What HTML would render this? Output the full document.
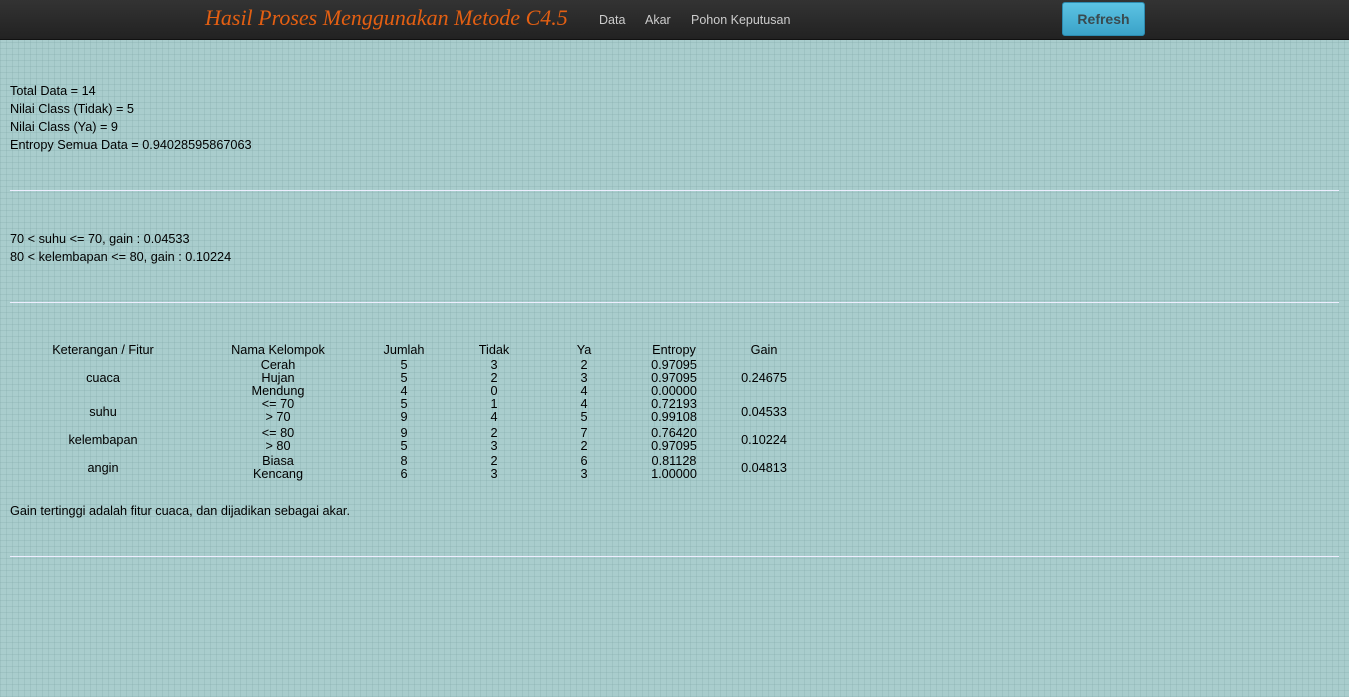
<!DOCTYPE html>
<html><head><meta charset="utf-8"><style>
*{margin:0;padding:0;box-sizing:border-box}
body{width:1349px;height:697px;overflow:hidden;position:relative;font-family:"Liberation Sans",sans-serif;font-size:12.7px;color:#000;
background-color:#a9cdcd;
background-image:linear-gradient(rgba(120,160,160,.22) 1px,transparent 1px),linear-gradient(90deg,rgba(120,160,160,.22) 1px,transparent 1px);
background-size:6px 6px;}
.nav{position:absolute;left:0;top:0;width:1349px;height:40px;background:linear-gradient(#333,#222);border-bottom:1px solid #111}
.title{position:absolute;left:205px;top:5px;font-family:"Liberation Serif",serif;font-style:italic;font-size:22px;color:#e35f12}
.nl{position:absolute;top:13px;color:#ccc;font-size:12.5px}
.btn{position:absolute;left:1062px;top:2px;width:83px;height:34px;border-radius:3px;background:linear-gradient(#5cc3e3,#3aa2c8);border:1px solid #2c8bb0;color:#3a4a4f;font-weight:bold;font-size:14px;text-align:center;line-height:33px}
.t{position:absolute;left:10px;line-height:18px}
hr{position:absolute;left:10px;width:1329px;border:0;border-top:1px solid #eef;height:0}
.c{position:absolute;transform:translateX(-50%);white-space:nowrap;line-height:13px;top:0}
</style></head><body>
<div class="nav">
<div class="title">Hasil Proses Menggunakan Metode C4.5</div>
<div class="nl" style="left:599px">Data</div>
<div class="nl" style="left:645px">Akar</div>
<div class="nl" style="left:691px">Pohon Keputusan</div>
<div class="btn">Refresh</div>
</div>
<div class="t" style="top:82px">Total Data = 14<br>Nilai Class (Tidak) = 5<br>Nilai Class (Ya) = 9<br>Entropy Semua Data = 0.94028595867063</div>
<hr style="top:190px">
<div class="t" style="top:230px">70 &lt; suhu &lt;= 70, gain : 0.04533<br>80 &lt; kelembapan &lt;= 80, gain : 0.10224</div>
<hr style="top:302px">
<div style="position:absolute;left:0;top:344px">
<div class="c" style="left:103px">Keterangan / Fitur</div>
<div class="c" style="left:278px">Nama Kelompok</div>
<div class="c" style="left:404px">Jumlah</div>
<div class="c" style="left:494px">Tidak</div>
<div class="c" style="left:584px">Ya</div>
<div class="c" style="left:674px">Entropy</div>
<div class="c" style="left:764px">Gain</div>
</div>
<div style="position:absolute;left:0;top:359px;line-height:13px">
<div class="c" style="left:103px;top:13px">cuaca</div>
<div class="c" style="left:103px;top:47px">suhu</div>
<div class="c" style="left:103px;top:75px">kelembapan</div>
<div class="c" style="left:103px;top:103px">angin</div>
<div class="c" style="left:278px;text-align:center">Cerah<br>Hujan<br>Mendung<br>&lt;= 70<br>&gt; 70</div>
<div class="c" style="left:278px;top:68px;text-align:center">&lt;= 80<br>&gt; 80</div>
<div class="c" style="left:278px;top:96px;text-align:center">Biasa<br>Kencang</div>
<div class="c" style="left:404px;text-align:center">5<br>5<br>4<br>5<br>9</div>
<div class="c" style="left:404px;top:68px;text-align:center">9<br>5<br><div style="height:2px"></div>8<br>6</div>
<div class="c" style="left:494px;text-align:center">3<br>2<br>0<br>1<br>4</div>
<div class="c" style="left:494px;top:68px;text-align:center">2<br>3<br><div style="height:2px"></div>2<br>3</div>
<div class="c" style="left:584px;text-align:center">2<br>3<br>4<br>4<br>5</div>
<div class="c" style="left:584px;top:68px;text-align:center">7<br>2<br><div style="height:2px"></div>6<br>3</div>
<div class="c" style="left:674px;text-align:center">0.97095<br>0.97095<br>0.00000<br>0.72193<br>0.99108</div>
<div class="c" style="left:674px;top:68px;text-align:center">0.76420<br>0.97095<br><div style="height:2px"></div>0.81128<br>1.00000</div>
<div class="c" style="left:764px;top:13px">0.24675</div>
<div class="c" style="left:764px;top:47px">0.04533</div>
<div class="c" style="left:764px;top:75px">0.10224</div>
<div class="c" style="left:764px;top:103px">0.04813</div>
</div>
<div class="t" style="top:502px">Gain tertinggi adalah fitur cuaca, dan dijadikan sebagai akar.</div>
<hr style="top:556px">
</body></html>
